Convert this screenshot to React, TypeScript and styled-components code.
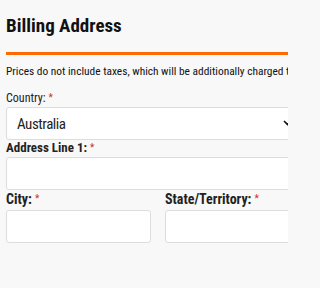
import React from "react";
import styled, { createGlobalStyle } from "styled-components";

const Global = createGlobalStyle`
  html, body { margin: 0; padding: 0; background: #f8f8f8; }
  body {
    font-family: "Roboto Condensed", "Arial Narrow", "Nimbus Sans Narrow", "Open Sans Condensed", Roboto, sans-serif;
    color: #222;
  }
`;

const Viewport = styled.div`
  width: 288px;
  height: 288px;
  overflow: hidden;
`;

const Page = styled.div`
  width: 304px;
  padding: 14px 0 0 6px;
`;

const Title = styled.h2`
  margin: 0;
  font-size: 19px;
  font-weight: 700;
  line-height: 23px;
  color: #111;
  padding-bottom: 15px;
  border-bottom: 3px solid #ff6a00;
`;

const Notice = styled.p`
  margin: 9px 0 0;
  font-size: 11.4px;
  line-height: 14px;
  color: #111;
  white-space: nowrap;
`;

const Form = styled.div`
  display: flex;
  flex-direction: column;
  margin-top: 13px;
`;

const Field = styled.div<{ $gap?: number }>`
  display: flex;
  flex-direction: column;
  flex: 1;
  min-width: 0;
  margin-top: ${(p) => p.$gap ?? 0}px;
`;

const Row = styled.div`
  display: flex;
  gap: 14px;
  margin-top: 1px;
`;

const Label = styled.label<{ $bold?: boolean; $size?: number }>`
  font-size: ${(p) => p.$size ?? 12}px;
  line-height: ${(p) => ((p.$size ?? 12) > 13 ? 16 : 14)}px;
  font-weight: ${(p) => (p.$bold ? 700 : 400)};
  color: #222;
  white-space: nowrap;
  margin-bottom: ${(p) => ((p.$size ?? 12) > 13 ? 3 : 2)}px;
`;

const Req = styled.span`
  color: #c9302c;
  font-size: 10px;
  font-weight: 400;
  margin-left: 3px;
  vertical-align: top;
`;

const SelectBox = styled.div`
  position: relative;
  height: 33px;
  box-sizing: border-box;
  background: #fff;
  border: 1px solid #ddd;
  border-radius: 3px;
  display: flex;
  align-items: center;
  padding-left: 10px;
  font-size: 15px;
  letter-spacing: -0.03em;
  color: #222;
`;

const Chevron = styled.svg`
  position: absolute;
  right: 17px;
  top: 12px;
`;

const Input = styled.div`
  height: 33px;
  box-sizing: border-box;
  background: #fff;
  border: 1px solid #ddd;
  border-radius: 3px;
`;

export default function App() {
  return (
    <>
      <Global />
      <Viewport>
        <Page>
          <Title>Billing Address</Title>
          <Notice>
            Prices do not include taxes, which will be additionally charged to your account.
          </Notice>
          <Form>
            <Field>
              <Label>
                Country:<Req>*</Req>
              </Label>
              <SelectBox>
                Australia
                <Chevron width="9" height="6" viewBox="0 0 9 6">
                  <path d="M1 1l3.5 3.5L8 1" fill="none" stroke="#111" strokeWidth="1.6" />
                </Chevron>
              </SelectBox>
            </Field>
            <Field $gap={1}>
              <Label $bold $size={13}>
                Address Line 1:<Req>*</Req>
              </Label>
              <Input />
            </Field>
            <Row>
              <Field>
                <Label $bold $size={14}>
                  City:<Req>*</Req>
                </Label>
                <Input />
              </Field>
              <Field>
                <Label $bold $size={14}>
                  State/Territory:<Req>*</Req>
                </Label>
                <Input />
              </Field>
            </Row>
          </Form>
        </Page>
      </Viewport>
    </>
  );
}
